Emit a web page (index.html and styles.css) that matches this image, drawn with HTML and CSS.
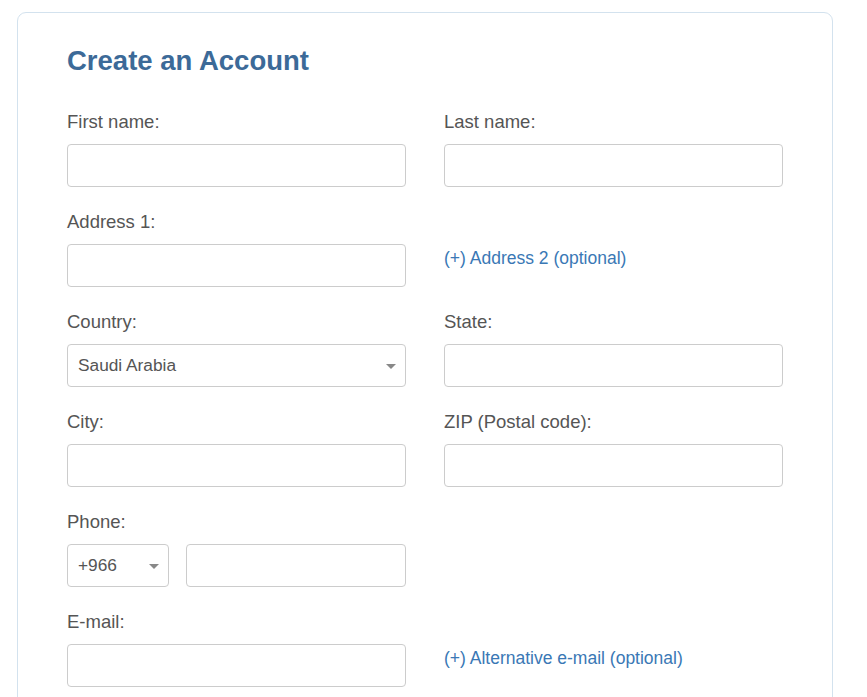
FILE: index.html
```html
<!DOCTYPE html>
<html lang="en">
<head>
<meta charset="utf-8">
<title>Create an Account</title>
<link rel="stylesheet" href="styles.css">
</head>
<body>
<div class="card">
  <h1 class="title">Create an Account</h1>
  <form class="form">
    <div class="field">
      <label class="label">First name:</label>
      <input class="input" type="text">
    </div>
    <div class="field">
      <label class="label">Last name:</label>
      <input class="input" type="text">
    </div>
    <div class="field">
      <label class="label">Address 1:</label>
      <input class="input" type="text">
    </div>
    <div class="field link-cell">
      <a class="link" href="#">(+) Address 2 (optional)</a>
    </div>
    <div class="field">
      <label class="label">Country:</label>
      <div class="select">
        <span class="select-text">Saudi Arabia</span>
        <span class="caret"></span>
      </div>
    </div>
    <div class="field">
      <label class="label">State:</label>
      <input class="input" type="text">
    </div>
    <div class="field">
      <label class="label">City:</label>
      <input class="input" type="text">
    </div>
    <div class="field">
      <label class="label">ZIP (Postal code):</label>
      <input class="input" type="text">
    </div>
    <div class="field">
      <label class="label">Phone:</label>
      <div class="phone-row">
        <div class="select select-code">
          <span class="select-text">+966</span>
          <span class="caret"></span>
        </div>
        <input class="input" type="text">
      </div>
    </div>
    <div class="field"></div>
    <div class="field">
      <label class="label">E-mail:</label>
      <input class="input" type="text">
    </div>
    <div class="field link-cell">
      <a class="link" href="#">(+) Alternative e-mail (optional)</a>
    </div>
  </form>
</div>
</body>
</html>
```

FILE: styles.css
```css
html, body {
  margin: 0;
  padding: 0;
  background: #ffffff;
}

body {
  padding: 12px 34px 0 17px;
  font-family: "Liberation Sans", Arial, sans-serif;
  overflow: hidden;
  height: 697px;
  box-sizing: border-box;
}

.card {
  border: 1px solid #d3e2ee;
  border-radius: 9px;
  padding: 32px 48px 120px 49px;
  background: #fff;
}

.title {
  margin: 0;
  font-size: 27.5px;
  line-height: 32px;
  font-weight: bold;
  color: #3c6a98;
}

.form {
  margin-top: 35px;
  display: grid;
  grid-template-columns: 339px 339px;
  column-gap: 38px;
  row-gap: 25px;
}

.field {
  display: flex;
  flex-direction: column;
  min-width: 0;
}

.label {
  font-size: 18.5px;
  line-height: 20px;
  color: #555555;
  margin-bottom: 12px;
}

.input {
  box-sizing: border-box;
  height: 43px;
  width: 100%;
  min-width: 0;
  border: 1px solid #cccccc;
  border-radius: 4px;
  margin: 0;
  padding: 0 10px;
  font-family: inherit;
  font-size: 17px;
  background: #fff;
}

.select {
  box-sizing: border-box;
  height: 43px;
  border: 1px solid #cccccc;
  border-radius: 4px;
  display: flex;
  align-items: center;
  justify-content: space-between;
  padding: 0 9px 0 10px;
  font-size: 17.3px;
  color: #555555;
}

.select-text {
  line-height: 22px;
  padding-bottom: 2px;
}

.caret {
  width: 0;
  height: 0;
  border-left: 5px solid transparent;
  border-right: 5px solid transparent;
  border-top: 5px solid #888888;
  margin-top: 1px;
}

.phone-row {
  display: flex;
  gap: 17px;
}

.select-code {
  width: 102px;
  flex: none;
}

.phone-row .input {
  flex: 1 1 0;
  width: auto;
}

.link-cell {
  padding-top: 35px;
}

.link {
  font-size: 17.5px;
  line-height: 22px;
  color: #3a78b5;
  text-decoration: none;
}
```
